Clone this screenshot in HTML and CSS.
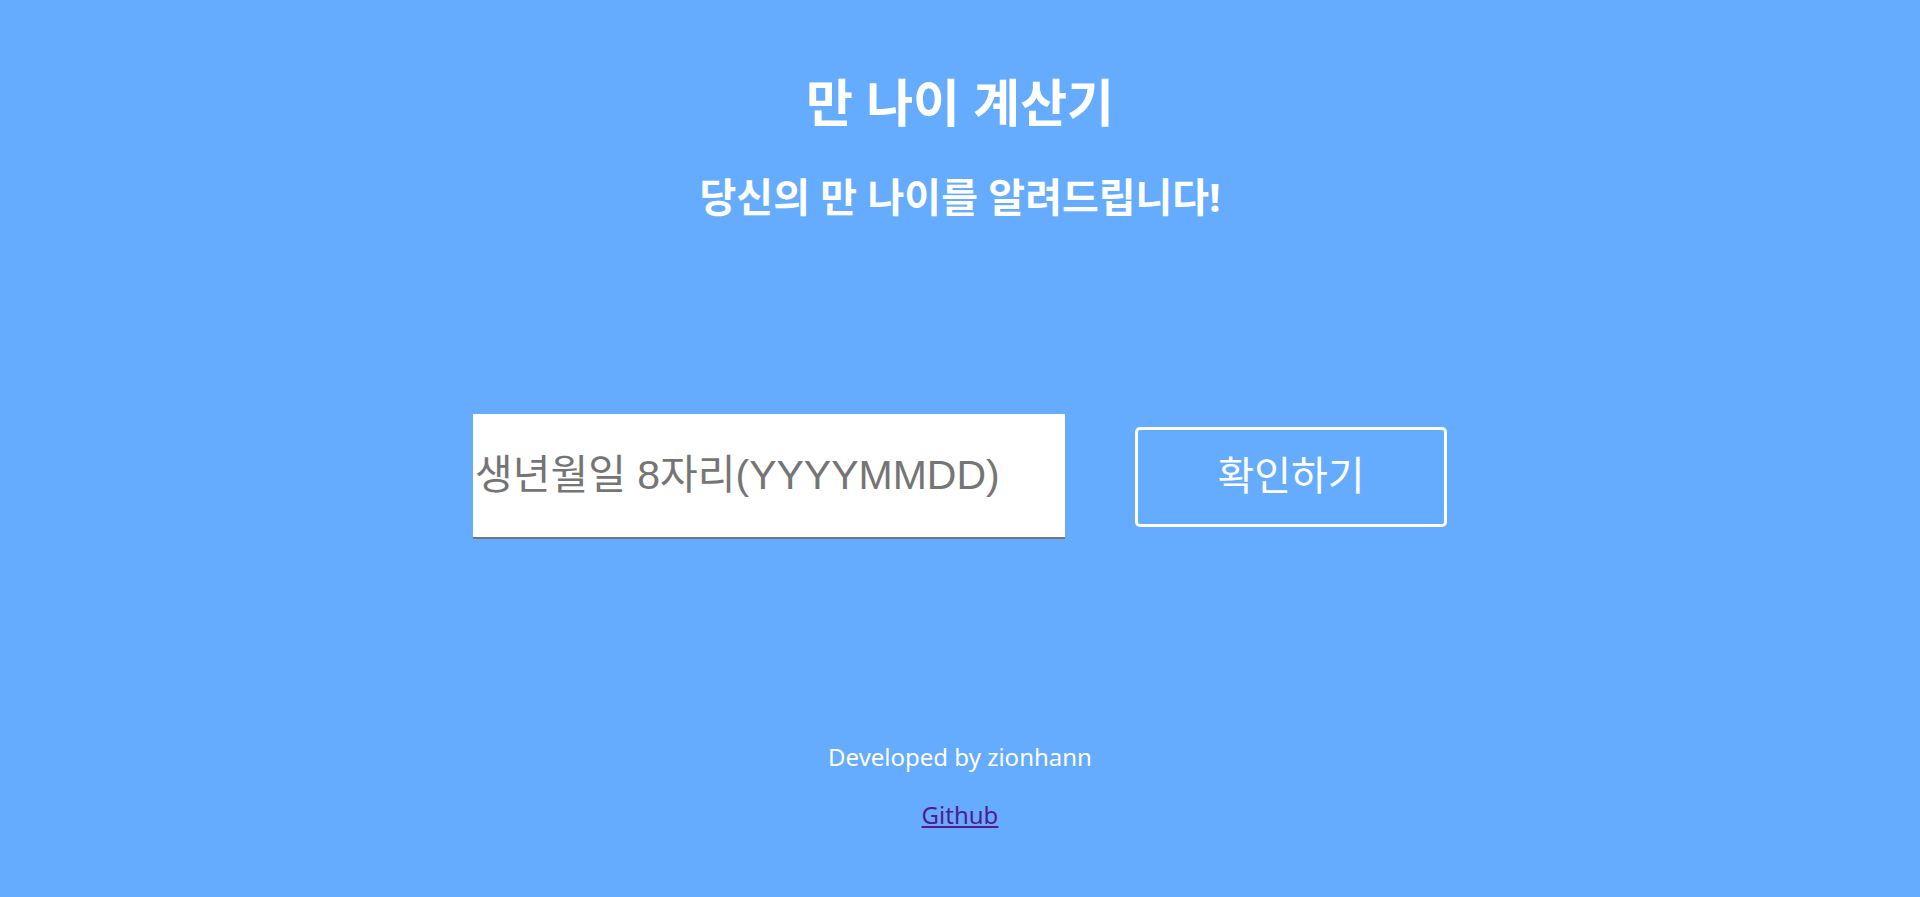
FILE: index.html
```html
<!DOCTYPE html>
<html lang="ko">
<head>
<meta charset="utf-8">
<title>만 나이 계산기</title>
<link rel="stylesheet" href="styles.css">
</head>
<body>
<header class="intro">
<h1 class="title">만 나이 계산기</h1>
<h2 class="subtitle">당신의 만 나이를 알려드립니다!</h2>
</header>
<main>
<form class="age-form">
<input class="birth-input" type="text" aria-label="생년월일" placeholder="생년월일 8자리(YYYYMMDD)">
<button class="submit-button" type="button">확인하기</button>
</form>
</main>
<footer class="credits">
<p class="author">Developed by zionhann</p>
<a class="repo-link" href="#">Github</a>
</footer>
</body>
</html>
```
FILE: styles.css
```css
* {
  box-sizing: border-box;
}

body {
  margin: 0;
  padding: 62px 16px;
  background: #65acff;
  color: #fff;
  font-family: "Noto Sans", "Noto Sans CJK KR", sans-serif;
  text-align: center;
}

.title {
  margin: 0;
  font-size: 51px;
  line-height: 80px;
}

.subtitle {
  margin: 25px 0 0;
  font-size: 40px;
  line-height: 60px;
}

.age-form {
  display: flex;
  flex-wrap: wrap;
  justify-content: center;
  align-items: center;
  gap: 70px;
  margin-top: 187px;
}

.birth-input {
  width: 592px;
  max-width: 100%;
  padding: 31px 2px 32px;
  border: 0;
  border-bottom: 2px solid #767676;
  font-family: "Liberation Sans", "Noto Sans CJK KR", sans-serif;
  font-size: 41px;
  line-height: 60px;
}

.birth-input::placeholder {
  color: #757575;
}

.submit-button {
  width: 312px;
  height: 100px;
  padding: 0 0 8px;
  border: 3px solid #fff;
  border-radius: 5px;
  background: transparent;
  color: #fff;
  font-family: "Noto Sans CJK KR", sans-serif;
  font-size: 40px;
}

.credits {
  margin-top: 198px;
  font-size: 24px;
  line-height: 40px;
}

.author {
  margin: 0 0 18px;
}

.repo-link {
  color: #551a8b;
}
```
